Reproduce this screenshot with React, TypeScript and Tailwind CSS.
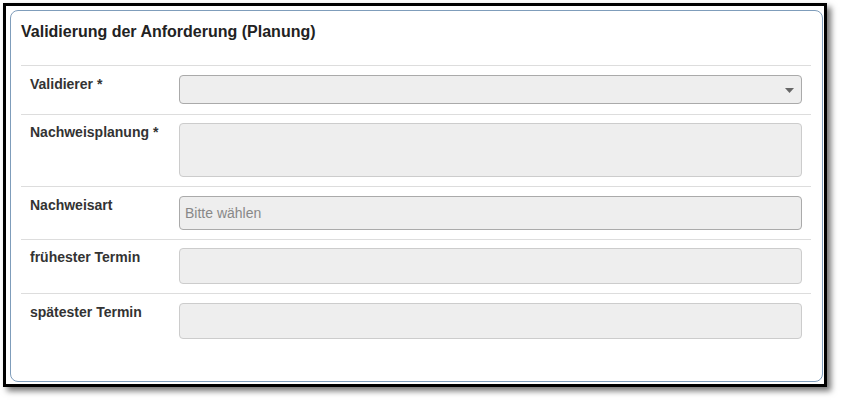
import React from "react";

function Row({
  label,
  children,
  pt,
  pb,
}: {
  label: string;
  children: React.ReactNode;
  pt: string;
  pb: string;
}) {
  return (
    <div className={`flex items-start border-t border-[#dddddd] ${pt} ${pb}`}>
      <div className="w-[158px] shrink-0 pl-[9px] text-[14px] font-bold leading-[18px] text-[#333333]">
        {label}
      </div>
      <div className="flex-1">{children}</div>
    </div>
  );
}

export default function App() {
  return (
    <div
      className="w-[841px] h-[401px] bg-white"
      style={{ fontFamily: '"Liberation Sans", Arial, sans-serif' }}
    >
      <div className="pl-[3px] pt-[3px]">
        <div className="w-[824px] h-[384px] border-[3px] border-black bg-white pl-[4px] pt-[4px] shadow-[4px_4px_6px_rgba(0,0,0,0.55)]">
          <div className="w-[813px] h-[372px] rounded-[8px] border border-[#7f9dbb] bg-white pl-[10px] pr-[11px] pt-[11px]">
            <div className="h-[20px] text-[16px] font-bold leading-[20px] text-[#222222]">
              Validierung der Anforderung (Planung)
            </div>
            <div className="h-[23px]" />
            <Row label="Validierer *" pt="pt-[9px]" pb="pb-[10px]">
              <div className="relative h-[29px] w-[623px] rounded-[4px] border border-[#aaaaaa] bg-[#eeeeee]">
                <svg
                  className="absolute right-[7px] top-[12px]"
                  width="9"
                  height="5"
                  viewBox="0 0 9 5"
                >
                  <path d="M0 0 L9 0 L4.5 5 Z" fill="#666666" />
                </svg>
              </div>
            </Row>
            <Row label="Nachweisplanung *" pt="pt-[8px]" pb="pb-[9px]">
              <div className="h-[54px] w-[623px] rounded-[4px] border border-[#cccccc] bg-[#eeeeee]" />
            </Row>
            <Row label="Nachweisart" pt="pt-[9px]" pb="pb-[9px]">
              <div className="flex h-[34px] w-[623px] items-center rounded-[4px] border border-[#aaaaaa] bg-[#eeeeee] pl-[5px] text-[14px] text-[#888888]">
                Bitte wählen
              </div>
            </Row>
            <Row label="frühester Termin" pt="pt-[8px]" pb="pb-[9px]">
              <div className="h-[36px] w-[623px] rounded-[4px] border border-[#cccccc] bg-[#eeeeee]" />
            </Row>
            <Row label="spätester Termin" pt="pt-[9px]" pb="pb-[9px]">
              <div className="h-[36px] w-[623px] rounded-[4px] border border-[#cccccc] bg-[#eeeeee]" />
            </Row>
          </div>
        </div>
      </div>
    </div>
  );
}
